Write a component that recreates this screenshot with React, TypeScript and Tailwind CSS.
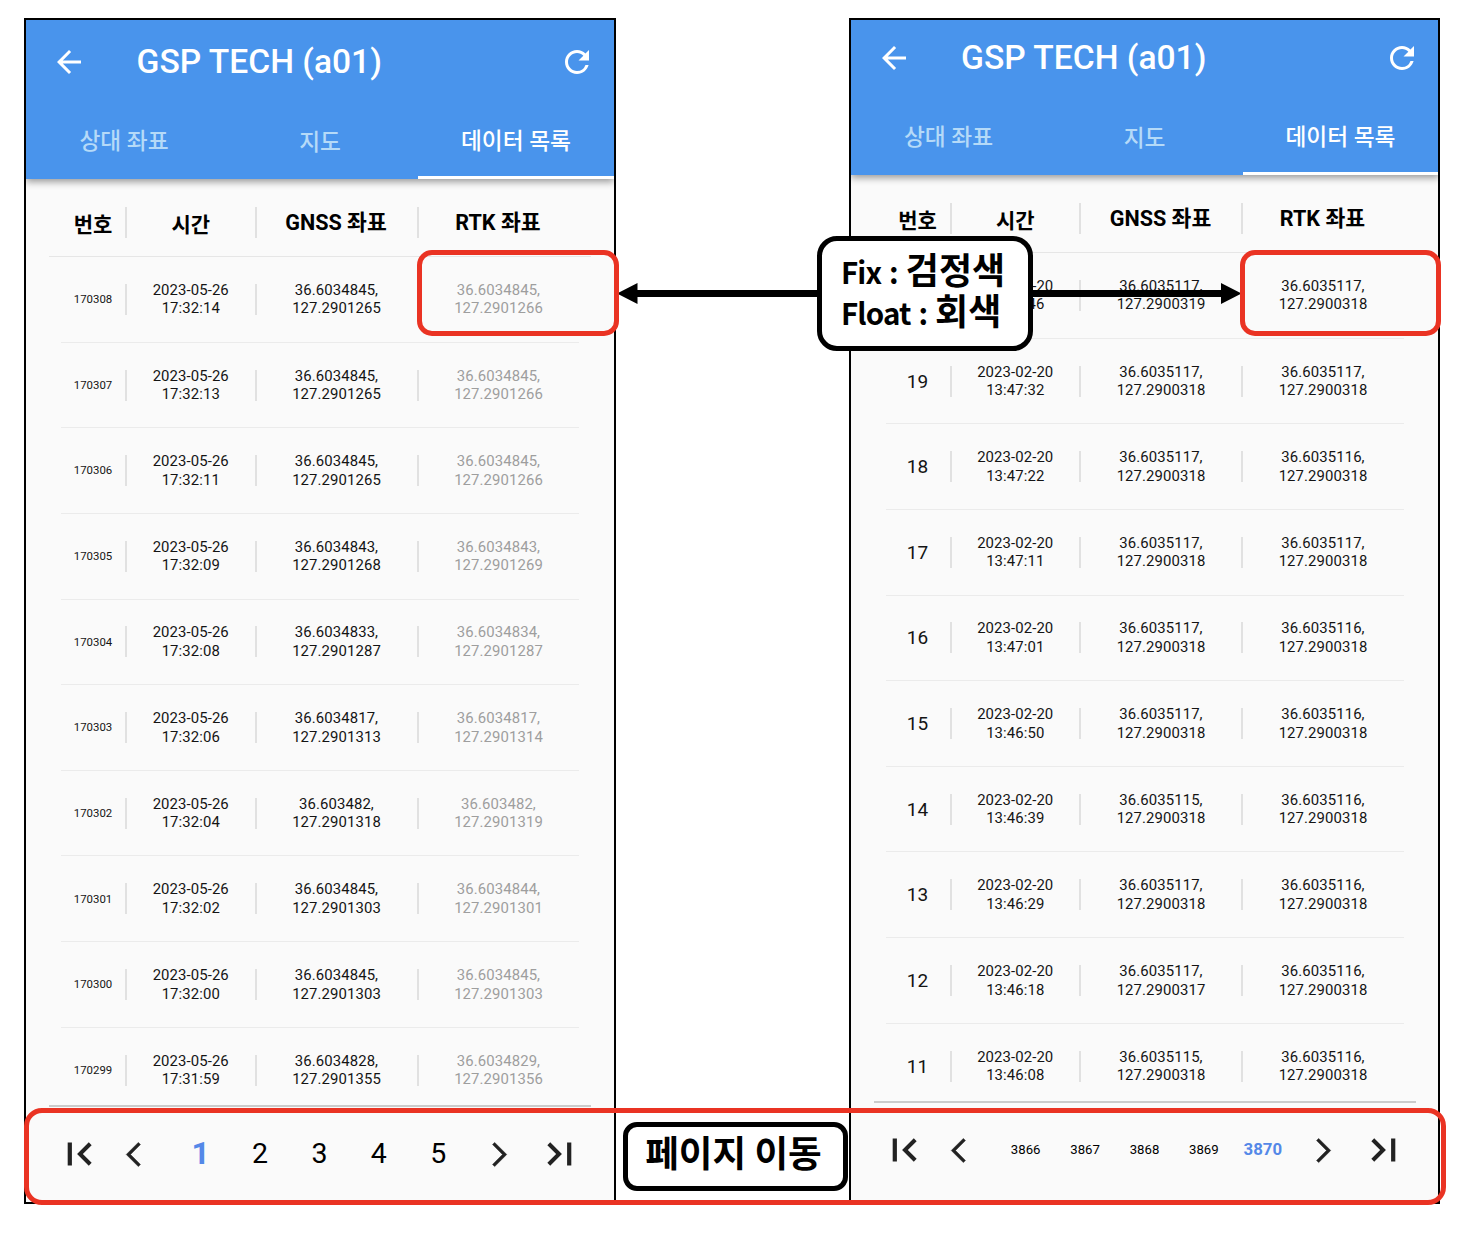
import React from "react";
import { MdArrowBack, MdRefresh } from "react-icons/md";

type Row = { no: string; date: string; time: string; gnss: [string, string]; rtk: [string, string] };

const row = (no: string, date: string, time: string, g1: string, g2: string, r1: string, r2: string): Row => ({
  no,
  date,
  time,
  gnss: [g1 + ",", g2],
  rtk: [r1 + ",", r2],
});

const D1 = "2023-05-26";
const D2 = "2023-02-20";

const floatRows: Row[] = [
  row("170308", D1, "17:32:14", "36.6034845", "127.2901265", "36.6034845", "127.2901266"),
  row("170307", D1, "17:32:13", "36.6034845", "127.2901265", "36.6034845", "127.2901266"),
  row("170306", D1, "17:32:11", "36.6034845", "127.2901265", "36.6034845", "127.2901266"),
  row("170305", D1, "17:32:09", "36.6034843", "127.2901268", "36.6034843", "127.2901269"),
  row("170304", D1, "17:32:08", "36.6034833", "127.2901287", "36.6034834", "127.2901287"),
  row("170303", D1, "17:32:06", "36.6034817", "127.2901313", "36.6034817", "127.2901314"),
  row("170302", D1, "17:32:04", "36.603482", "127.2901318", "36.603482", "127.2901319"),
  row("170301", D1, "17:32:02", "36.6034845", "127.2901303", "36.6034844", "127.2901301"),
  row("170300", D1, "17:32:00", "36.6034845", "127.2901303", "36.6034845", "127.2901303"),
  row("170299", D1, "17:31:59", "36.6034828", "127.2901355", "36.6034829", "127.2901356"),
];

const fixRows: Row[] = [
  row("", D2, "13:47:46", "36.6035117", "127.2900319", "36.6035117", "127.2900318"),
  row("19", D2, "13:47:32", "36.6035117", "127.2900318", "36.6035117", "127.2900318"),
  row("18", D2, "13:47:22", "36.6035117", "127.2900318", "36.6035116", "127.2900318"),
  row("17", D2, "13:47:11", "36.6035117", "127.2900318", "36.6035117", "127.2900318"),
  row("16", D2, "13:47:01", "36.6035117", "127.2900318", "36.6035116", "127.2900318"),
  row("15", D2, "13:46:50", "36.6035117", "127.2900318", "36.6035116", "127.2900318"),
  row("14", D2, "13:46:39", "36.6035115", "127.2900318", "36.6035116", "127.2900318"),
  row("13", D2, "13:46:29", "36.6035117", "127.2900318", "36.6035116", "127.2900318"),
  row("12", D2, "13:46:18", "36.6035117", "127.2900317", "36.6035116", "127.2900318"),
  row("11", D2, "13:46:08", "36.6035115", "127.2900318", "36.6035116", "127.2900318"),
];

function PageEdge({ flip = false }: { flip?: boolean }) {
  return (
    <svg viewBox="0 0 24 24" fill="#222" className={flip ? "size-[46px] -scale-x-100" : "size-[46px]"}>
      <path d="M18.6 16.59L14.01 12l4.59-4.59L17.1 5.9l-6.1 6.1 6.1 6.1zM6.1 6h2.2v12H6.1z" />
    </svg>
  );
}

function PageStep({ flip = false }: { flip?: boolean }) {
  return (
    <svg
      viewBox="0 0 24 24"
      fill="#222"
      stroke="#222"
      strokeWidth="0.4"
      className={flip ? "size-[29px] -scale-x-100" : "size-[29px]"}
    >
      <path d="M17.77 3.77L16 2 6 12l10 10 1.77-1.77L9.54 12z" />
    </svg>
  );
}

function Divider() {
  return <span className="h-[31px] w-0.5 shrink-0 bg-[#e1e1e1]" />;
}

function Cells({ children }: { children: React.ReactNode[] }) {
  const widths = ["w-[64px]", "w-[127.5px]", "w-[160px]", "w-[160px]"];
  return (
    <>
      {children.map((c, i) => (
        <React.Fragment key={i}>
          {i > 0 && <Divider />}
          <div className={`${widths[i]} shrink-0 text-center whitespace-nowrap`}>{c}</div>
        </React.Fragment>
      ))}
    </>
  );
}

type PhoneProps = {
  rows: Row[];
  pages: string[];
  active: number;
  smallNo: boolean;
  greyRtk: boolean;
  frame: string;
  inner: string;
};

function Phone({ rows, pages, active, smallNo, greyRtk, frame, inner }: PhoneProps) {
  return (
    <section className={`h-[1186px] overflow-hidden border-2 border-black bg-[#fafafa] ${frame}`}>
      <div className={`w-[588px] ${inner}`}>
        <header className="relative flex h-[159px] flex-col bg-[#4994ec] text-white shadow-[0_3px_7px_rgba(0,0,0,0.38)]">
          <div className="flex h-[84px] items-center pr-[19px] pl-[25px]">
            <MdArrowBack className="size-9" />
            <h1 className="ml-[49.6px] flex-1 text-[33.6px] leading-[40px] font-medium">GSP TECH (a01)</h1>
            <MdRefresh className="size-9" />
          </div>
          <nav className="grid flex-1 grid-cols-3 text-center text-[22.7px] leading-[31px] font-medium">
            <span className="pt-[22px] text-[#b5daf8]">상대 좌표</span>
            <span className="pt-[23px] text-[#b5daf8]">지도</span>
            <span className="border-b-[3px] border-white pt-[22px]">데이터 목록</span>
          </nav>
        </header>

        <div className="ml-[35px] flex h-[77px] items-center pt-[10px] text-[21.6px] leading-[30px] font-bold text-black">
          <Cells>
            {["번호", "시간", "GNSS 좌표", "RTK 좌표"].map((t, i) => (
              <div key={t} className={i < 2 ? "pt-[4px] text-[21px]" : "-ml-px"}>{t}</div>
            ))}
          </Cells>
        </div>
        <div className="mx-[23px] h-px bg-[#e6e6e6]" />

        <div className="h-[848px] overflow-hidden">
          {rows.map((r) => (
            <div key={r.time} className="ml-[35px] flex h-[85.65px] w-[518px] items-center border-b border-[#ebebeb] pt-[0.2px] text-[14.9px] leading-[18.5px] tracking-[0.1px] text-[#141414]">
              <Cells>
                {[
                  <div className={smallNo ? "text-[11.4px] tracking-normal" : "pt-[1.5px] text-[19px]"}>{r.no}</div>,
                  <div>{r.date}<br />{r.time}</div>,
                  <div>{r.gnss[0]}<br />{r.gnss[1]}</div>,
                  <div className={greyRtk ? "text-[#9e9e9e]" : ""}>{r.rtk[0]}<br />{r.rtk[1]}</div>,
                ]}
              </Cells>
            </div>
          ))}
        </div>
        <div className="mx-[23px] h-0.5 bg-[#cbcbcb]" />

        <div className="flex h-[94px] items-center pl-[30px] text-black">
          <span className="flex w-[46px] justify-center"><PageEdge /></span>
          <span className="ml-[17px] flex w-[29px] justify-center"><PageStep /></span>
          <div className="ml-[23px] flex">
            {pages.map((p, i) => (
              <span
                key={p}
                className={
                  "w-[59.4px] text-center " +
                  (smallNo
                    ? i === active
                      ? "-mt-px text-[32px] leading-[34px] font-bold text-[#5488e8]"
                      : "text-[28.5px] leading-[34px]"
                    : i === active
                      ? "-mt-[2px] text-[16.8px] leading-[34px] font-bold text-[#5488e8]"
                      : "-mt-px pl-px text-[13.2px] leading-[34px]")
                }
              >
                {p}
              </span>
            ))}
          </div>
          <span className="ml-[17px] flex w-[29px] justify-center"><PageStep flip /></span>
          <span className="ml-[23px] flex w-[46px] justify-center"><PageEdge flip /></span>
        </div>
      </div>
    </section>
  );
}

export default function App() {
  return (
    <main className="relative h-[1238px] w-[1474px] overflow-hidden bg-white font-[Roboto,'Noto_Sans_CJK_KR',sans-serif]">
      <div className="flex gap-[233px] pt-[18px] pl-6">
        <Phone rows={floatRows} pages={["1", "2", "3", "4", "5"]} active={0} smallNo greyRtk frame="w-[592px]" inner="" />
        <Phone
          rows={fixRows}
          pages={["3866", "3867", "3868", "3869", "3870"]}
          active={4}
          smallNo={false}
          greyRtk={false}
          frame="w-[591px]"
          inner="-mt-1 -ml-[0.5px]"
        />
      </div>

      {/* Annotation layer over both phones */}
      <svg className="absolute top-[280px] left-[616px]" width="628" height="28">
        <path d="M18 13.5H606" stroke="#000" strokeWidth="7" />
        <path d="M1 13.5L21.5 3v21zM625.5 13.5L605 3v21z" />
      </svg>
      <div className="absolute top-[250px] left-[417px] h-[86px] w-[202px] rounded-[15px] border-5 border-[#ea3323]" />
      <div className="absolute top-[250px] left-[1240px] h-[86px] w-[201px] rounded-[15px] border-5 border-[#ea3323]" />
      <div className="absolute top-[236px] left-[817px] h-[115px] w-[216px] rounded-[20px] border-5 border-black bg-white pt-[7px] pl-[19px] font-['Noto_Sans_CJK_KR',sans-serif] text-[29.5px] leading-[40px] font-bold tracking-[-0.9px] whitespace-nowrap text-black [word-spacing:2.2px]">
        <div>Fix : <span className="text-[36px] tracking-normal">검정색</span></div>
        <div className="-mt-[2px]">Float : <span className="text-[36px] tracking-normal">회색</span></div>
      </div>
      <div className="absolute top-[1108px] left-[24px] h-[97px] w-[1422px] rounded-[18px] border-5 border-[#ea3323]" />
      <div className="absolute top-[1122px] left-[623px] h-[69px] w-[225px] rounded-[14px] border-5 border-black bg-white pr-[4px] text-center font-['Noto_Sans_CJK_KR',sans-serif] text-[36.6px] leading-[49px] font-bold whitespace-nowrap text-black">
        페이지 이동
      </div>
    </main>
  );
}
